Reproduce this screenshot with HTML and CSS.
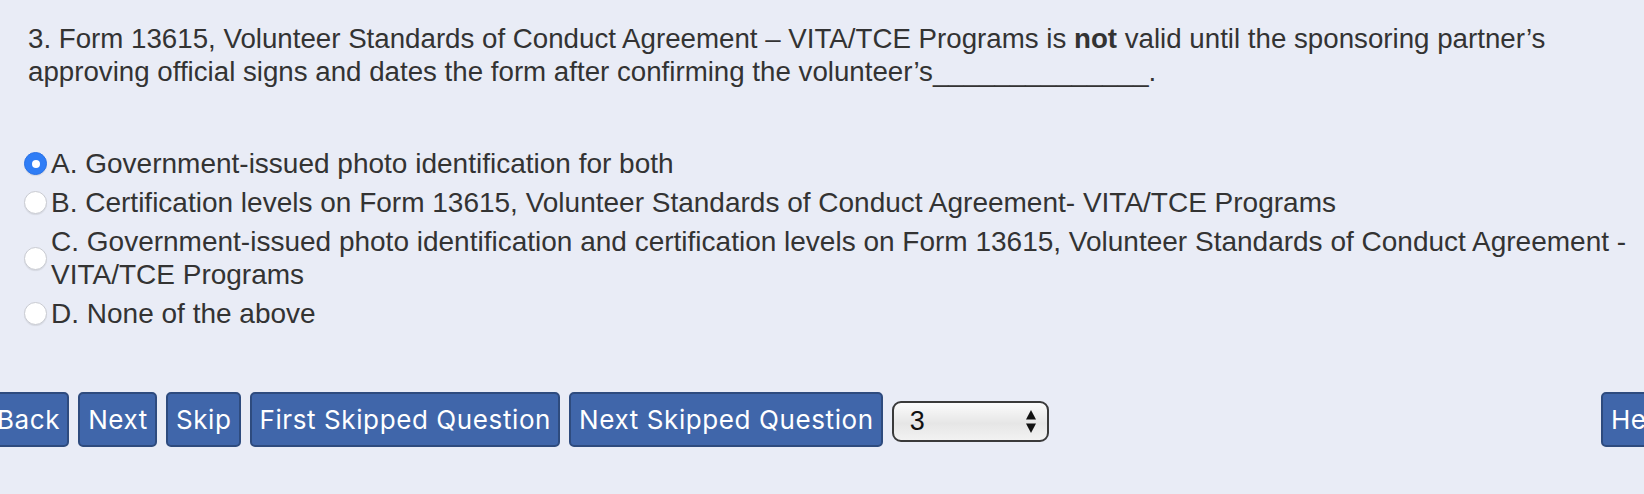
FILE: index.html
```html
<!DOCTYPE html>
<html lang="en">
<head>
<meta charset="utf-8">
<title>Question 3</title>
<link rel="stylesheet" href="styles.css">
</head>
<body>
<div class="page">
  <p class="question">3. Form 13615, Volunteer Standards of Conduct Agreement – VITA/TCE Programs is <b>not</b> valid until the sponsoring partner’s approving official signs and dates the form after confirming the volunteer’s______________.</p>

  <div class="options">
    <label class="option"><span class="radio checked"></span><span class="opt-text">A. Government-issued photo identification for both</span></label>
    <label class="option"><span class="radio"></span><span class="opt-text">B. Certification levels on Form 13615, Volunteer Standards of Conduct Agreement- VITA/TCE Programs</span></label>
    <label class="option"><span class="radio"></span><span class="opt-text">C. Government-issued photo identification and certification levels on Form 13615, Volunteer Standards of Conduct Agreement - VITA/TCE Programs</span></label>
    <label class="option"><span class="radio"></span><span class="opt-text">D. None of the above</span></label>
  </div>

  <div class="actions">
    <button class="btn">Back</button>
    <button class="btn">Next</button>
    <button class="btn">Skip</button>
    <button class="btn">First Skipped Question</button>
    <button class="btn">Next Skipped Question</button>
    <span class="select-wrap">
      <span class="select-value">3</span>
      <svg class="select-arrows" width="10" height="23" viewBox="0 0 10 23"><path d="M5 0 L10 9.5 L0 9.5 Z" fill="#111"/><path d="M0 13.5 L10 13.5 L5 23 Z" fill="#111"/></svg>
    </span>
    <button class="btn help">Help</button>
  </div>
</div>
</body>
</html>
```
FILE: styles.css
```css
html, body {
  margin: 0;
  padding: 0;
  overflow: hidden;
  background: #e9ecf6;
}

.page {
  padding: 22px 8px 0 24px;
}

.question {
  margin: 0 0 0 4px;
  font-family: "Liberation Sans", Arial, sans-serif;
  font-size: 27.7px;
  line-height: 33px;
  color: #333333;
}

.question b {
  font-weight: bold;
}

.options {
  margin-top: 59px;
  display: flex;
  flex-direction: column;
  gap: 6px;
}

.option {
  display: flex;
  align-items: center;
  gap: 4px;
}

.radio {
  flex: none;
  width: 23px;
  height: 23px;
  border-radius: 50%;
  box-sizing: border-box;
  background: #ffffff;
  border: 1px solid #c9cbd2;
  box-shadow: 0 1px 1px rgba(0, 0, 0, 0.08);
}

.radio.checked {
  background: #2f7df6;
  border-color: #2a72e6;
  position: relative;
}

.radio.checked::after {
  content: "";
  position: absolute;
  left: 50%;
  top: 50%;
  width: 8px;
  height: 8px;
  margin: -4px 0 0 -4px;
  border-radius: 50%;
  background: #ffffff;
}

.opt-text {
  font-family: "Liberation Sans", Arial, sans-serif;
  font-size: 28px;
  line-height: 33px;
  color: #333333;
}

.actions {
  margin: 62px -43px 0 -37px;
  display: flex;
  align-items: center;
  gap: 9px;
}

.btn {
  height: 55px;
  padding: 0 7px 0 8px;
  box-sizing: border-box;
  font-family: Inter, "Noto Sans", sans-serif;
  font-size: 26px;
  letter-spacing: 0.6px;
  color: #ffffff;
  background: #4066aa;
  border: 2px solid #2e4b7e;
  border-radius: 5px;
}

.help {
  margin-left: auto;
}

.select-wrap {
  position: relative;
  display: flex;
  align-items: center;
  width: 157px;
  height: 41px;
  box-sizing: border-box;
  margin-top: 3px;
  padding-left: 16px;
  border: 2px solid #3a3a3a;
  border-radius: 9px;
  background: linear-gradient(#fbfbfb, #e6e6e6 55%, #f2f2f2);
  font-family: "Liberation Sans", Arial, sans-serif;
  font-size: 27px;
  color: #111;
}

.select-arrows {
  position: absolute;
  right: 11px;
  top: 7px;
}
```
